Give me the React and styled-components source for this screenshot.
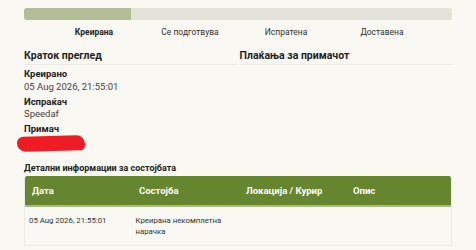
import React from "react";
import styled, { createGlobalStyle } from "styled-components";

const GlobalStyle = createGlobalStyle`
  html, body {
    margin: 0;
    padding: 0;
    background: #f9f8f2;
  }
  body {
    font-family: Roboto, "Noto Sans", sans-serif;
    color: #222;
  }
`;

const Page = styled.div`
  padding: 8px 24px 0;
`;

const Track = styled.div`
  height: 12px;
  background: #e4e3da;
  border-radius: 3px;
  overflow: hidden;
`;

const Fill = styled.div`
  height: 100%;
  background: #b3bd98;
`;

const Steps = styled.div`
  display: grid;
  grid-template-columns: repeat(4, 1fr);
  padding: 0 22px;
  margin-top: 6px;
`;

const Step = styled.div`
  text-align: center;
  font-size: 8.5px;
  line-height: 12px;
  font-weight: ${(p) => (p.$active ? 700 : 400)};
  color: ${(p) => (p.$active ? "#222" : "#333")};
`;

const Columns = styled.div`
  display: grid;
  grid-template-columns: 1fr 1fr;
  column-gap: 3px;
  margin-top: 11px;
`;

const Column = styled.div``;

const Heading = styled.div`
  font-size: 10.5px;
  font-weight: 700;
  line-height: 13px;
  padding-bottom: 2px;
  border-bottom: 1px solid #ecebe4;
  color: #1f1f1f;
`;

const Field = styled.div`
  margin-top: 3px;
`;

const Label = styled.div`
  font-size: 9.5px;
  font-weight: 700;
  line-height: 12.5px;
  color: #222;
`;

const Value = styled.div`
  font-size: 9.5px;
  line-height: 12px;
  color: #444;
`;

const Scribble = styled.div`
  width: 68px;
  height: 15px;
  margin-left: -7px;
  background: #ee1c25;
  border-radius: 9px 12px 7px 12px;
  transform: rotate(-1.5deg);
`;

const SectionTitle = styled.div`
  margin-top: 11px;
  font-size: 9px;
  font-weight: 700;
  line-height: 12px;
  color: #222;
`;

const Table = styled.div`
  margin-top: 2px;
  border: 1px solid #ebeae4;
  border-top: none;
  border-radius: 3px 3px 0 0;
  overflow: hidden;
`;

const HeaderRow = styled.div`
  display: grid;
  grid-template-columns: repeat(4, 1fr);
  align-items: center;
  height: 29px;
  background: #65862f;
  border-bottom: 2px solid #a9bb86;
  margin: 0 -1px;
`;

const HeadCell = styled.div`
  padding-left: 8px;
  font-size: 9.5px;
  font-weight: 700;
  color: #fff;
`;

const BodyRow = styled.div`
  display: grid;
  grid-template-columns: repeat(4, 1fr);
  padding: 8px 0 8px;
  min-height: 20px;
`;

const Cell = styled.div`
  padding-left: 4px;
  padding-right: 10px;
  font-size: 7.8px;
  line-height: 11px;
  color: #333;
`;

const steps = ["Креирана", "Се подготвува", "Испратена", "Доставена"];

export default function App() {
  return (
    <>
      <GlobalStyle />
      <Page>
        <Track>
          <Fill style={{ width: "25%" }} />
        </Track>
        <Steps>
          {steps.map((s, i) => (
            <Step key={s} $active={i === 0}>
              {s}
            </Step>
          ))}
        </Steps>

        <Columns>
          <Column>
            <Heading>Краток преглед</Heading>
            <Field>
              <Label>Креирано</Label>
              <Value>05 Aug 2026, 21:55:01</Value>
            </Field>
            <Field>
              <Label>Испраќач</Label>
              <Value>Speedaf</Value>
            </Field>
            <Field>
              <Label>Примач</Label>
              <Scribble />
            </Field>
          </Column>
          <Column>
            <Heading>Плаќања за примачот</Heading>
          </Column>
        </Columns>

        <SectionTitle>Детални информации за состојбата</SectionTitle>
        <Table>
          <HeaderRow>
            <HeadCell>Дата</HeadCell>
            <HeadCell>Состојба</HeadCell>
            <HeadCell>Локација / Курир</HeadCell>
            <HeadCell>Опис</HeadCell>
          </HeaderRow>
          <BodyRow>
            <Cell>05 Aug 2026, 21:55:01</Cell>
            <Cell>Креирана некомплетна нарачка</Cell>
            <Cell />
            <Cell />
          </BodyRow>
        </Table>
      </Page>
    </>
  );
}
